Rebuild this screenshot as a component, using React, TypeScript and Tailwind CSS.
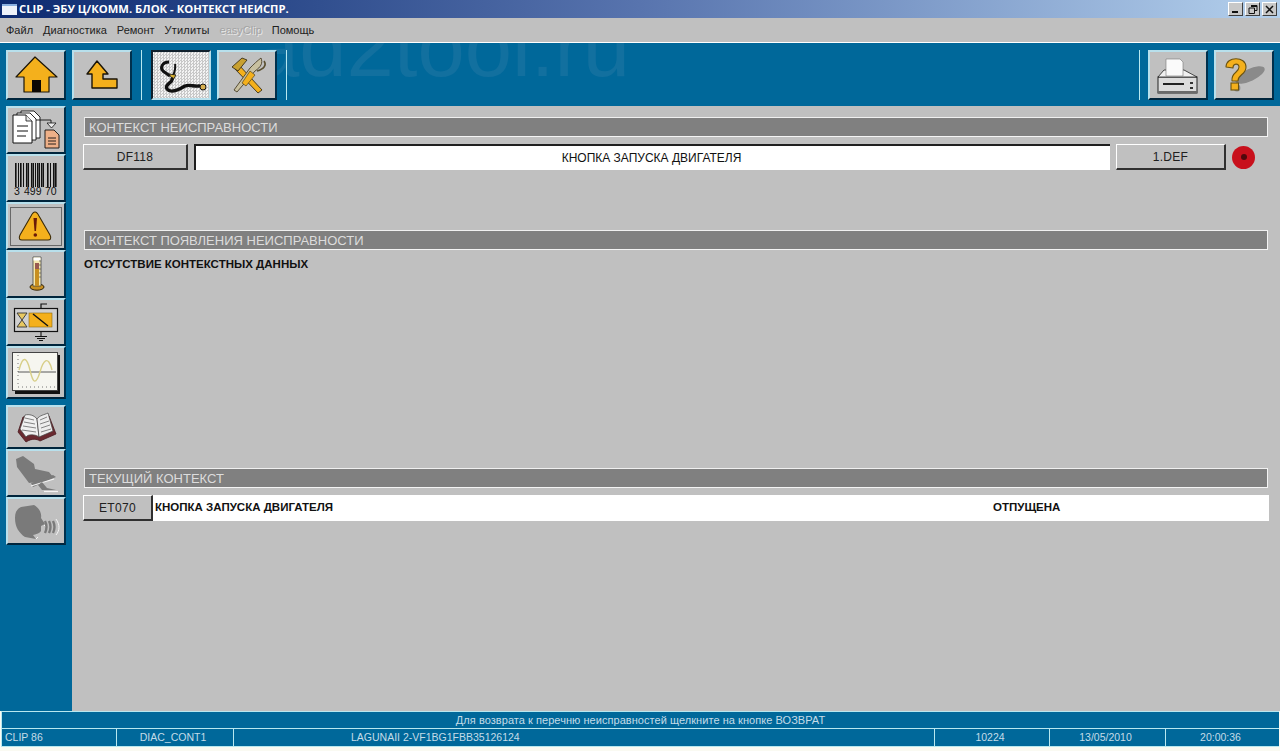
import type { ReactNode } from "react";
import { clsx } from "clsx";

const raised =
  "border-t-2 border-l-2 border-b-2 border-r-2 border-t-[#b8e0ec] border-l-[#b8e0ec] border-b-[#00253c] border-r-[#00304c] bg-[#c0c0c0]";

function IconBtn({
  h,
  className,
  pressed,
  children,
}: {
  h: number;
  className: string;
  pressed?: boolean;
  children: ReactNode;
}) {
  return (
    <div
      className={clsx(
        "relative w-[60px] shrink-0 overflow-hidden",
        className,
        pressed
          ? "border-2 border-t-[#10202c] border-l-[#10202c] border-b-[#b8e0ec] border-r-[#b8e0ec] bg-[repeating-conic-gradient(#c8c8c8_0_25%,#f4f4f4_0_50%)] bg-[length:3px_3px]"
          : raised
      )}
    >
      <svg width="56" height={h - 4} viewBox={`2 2 56 ${h - 4}`} className="block">
        {children}
      </svg>
    </div>
  );
}

const yellow = "#f4b01c";

function HomeIcon() {
  return (
    <>
      <path d="M29 7 L51 27 H43 V42 H18 V27 H10 Z" fill={yellow} stroke="#1a1408" strokeWidth="1.2" strokeLinejoin="round" />
      <rect x="26" y="30" width="9" height="12" fill="#0c0804" />
    </>
  );
}

function UpIcon() {
  return <path d="M25 11 L36 24 H31 V29 H45 V38 H20 V24 H15 Z" fill={yellow} stroke="#1a1408" strokeWidth="1.4" strokeLinejoin="round" />;
}

function StethoscopeIcon() {
  return (
    <>
      <path d="M18 12 C11 12 9 18 12 21 L19 26" fill="none" stroke="#111" strokeWidth="3" />
      <path d="M24 14 C25 18 24 21 22 26" fill="none" stroke="#111" strokeWidth="2" />
      <path d="M18 24 L25 25 L22 30 Z" fill="#d8b030" stroke="#111" strokeWidth="0.8" />
      <path d="M21 29 C22 33 13 34 16 39 C20 44 29 39 34 36 C39 34 43 37 48 36" fill="none" stroke="#111" strokeWidth="3.400" strokeLinecap="round" />
      <circle cx="52" cy="37" r="3" fill="#d8b050" stroke="#111" strokeWidth="1" />
    </>
  );
}

function ToolsIcon() {
  return (
    <>
      <path d="M22 15 L45 40 L41 43 L18 19 Z" fill={yellow} stroke="#3a3018" strokeWidth="0.9" />
      <path d="M15 17 L25 8 L30 10 L21 21 Z" fill="#c8a030" stroke="#3a3018" strokeWidth="0.9" />
      <path d="M44 8 C46 13 44 17 38 21 L20 42 L17 40 L33 18 C37 14 40 11 44 8 Z" fill="#c8c0a0" stroke="#4a4028" strokeWidth="0.9" />
      <path d="M33 21 L38 25 L29 36 L25 33 Z" fill={yellow} stroke="#3a3018" strokeWidth="0.6" />
      <path d="M47 11 C50 15 47 19 40 21" fill="none" stroke="#5a5030" strokeWidth="1.6" />
    </>
  );
}

function PrintIcon() {
  return (
    <>
      <rect x="10" y="27" width="39" height="16" fill="#dcdcdc" stroke="#222" strokeWidth="1" />
      <path d="M10 27 L16 20 H36 L49 27 Z" fill="#f0f0f0" stroke="#222" strokeWidth="0.8" />
      <path d="M18 9 H32 L35 12 V26 H18 Z" fill="#fafafa" stroke="#777" strokeWidth="0.6" />
      <rect x="15" y="33" width="21" height="2" fill="#222" />
      <rect x="42" y="32" width="3" height="2" fill="#333" />
      <rect x="42" y="37" width="3" height="2" fill="#333" />
      <rect x="10" y="41" width="39" height="2" fill="#6a6a6a" />
    </>
  );
}

function HelpIcon() {
  return (
    <>
      <ellipse cx="36" cy="25" rx="16" ry="6" fill="#8a8a8a" transform="rotate(-25 36 25)" />
      <circle cx="23" cy="38" r="3.400" fill="#8a8a8a" />
      <path d="M12 17 C12 6 32 6 32 17 C32 25 24 24 24 31 H18 C17 22 25 23 25 17 C25 13 19 13 19 18 Z" fill={yellow} stroke="#6a5210" strokeWidth="1.1" strokeLinejoin="round" />
      <rect x="17" y="33" width="7.500" height="7" fill={yellow} stroke="#6a5210" strokeWidth="1.1" />
    </>
  );
}

function DocsIcon() {
  return (
    <>
      <path d="M15 5 H28 L34 11 V32 H15 Z" fill="#fff" stroke="#111" strokeWidth="0.9" />
      <path d="M11 7 H24 L30 13 V34 H11 Z" fill="#fff" stroke="#111" strokeWidth="0.9" />
      <path d="M7 9 H20 L26 15 V37 H7 Z" fill="#fff" stroke="#111" strokeWidth="1" />
      <path d="M20 9 V15 H26" fill="#e8e8e8" stroke="#111" strokeWidth="0.8" />
      <path d="M11 20 H22 M11 25 H22 M11 30 H20" stroke="#111" strokeWidth="1" />
      <path d="M30 14 H45 M45 14 V17" stroke="#111" strokeWidth="0.9" fill="none" />
      <path d="M41 17 H50 L45.500 22 Z" fill="#eee" stroke="#111" strokeWidth="0.8" />
      <path d="M39 24 H48 L53 29 V42 H39 Z" fill="#eeb088" stroke="#111" strokeWidth="0.9" />
      <path d="M42 32 H50 M42 35 H50 M42 38 H50" stroke="#111" strokeWidth="0.9" />
    </>
  );
}

const barX = [9, 12, 14, 17, 20, 22, 25, 27, 29, 31, 33, 35, 37, 41, 44, 47, 49];
const barW = [1.6, 1, 1.6, 1, 1.6, 1, 1.6, 1, 1, 1.6, 1, 1.6, 1, 1.6, 1, 1.6, 1.6];

function BarcodeIcon() {
  return (
    <>
      {barX.map((x, i) => (
        <rect key={x} x={x} y="9" width={barW[i]} height="24" fill="#111" />
      ))}
      <text x="8" y="40.500" fontFamily="Liberation Sans, sans-serif" fontSize="10.500" fill="#111">
        3
      </text>
      <text x="18" y="40.500" fontFamily="Liberation Sans, sans-serif" fontSize="10.500" fill="#111">
        499
      </text>
      <text x="39" y="40.500" fontFamily="Liberation Sans, sans-serif" fontSize="10.500" fill="#111">
        70
      </text>
    </>
  );
}

function WarningIcon() {
  return (
    <>
      <rect x="4.500" y="5.500" width="51" height="38" fill="none" stroke="#111" strokeWidth="1" strokeDasharray="1 1" />
      <path d="M29 10 C31 10 32 12 33 14 L44 33 C46 37 44 38 42 38 H16 C14 38 12 37 14 33 L25 14 C26 12 27 10 29 10 Z" fill={yellow} stroke="#3a2a08" strokeWidth="1.1" />
      <path d="M27.500 16 H31 L30 29 H28.500 Z" fill="#6a1a08" />
      <circle cx="29.300" cy="33" r="1.800" fill="#6a1a08" />
    </>
  );
}

function ThermoIcon() {
  return (
    <>
      <ellipse cx="31" cy="37" rx="7" ry="3.200" fill="#c89020" stroke="#332408" strokeWidth="1" />
      <path d="M27 7 H35 V36 H27 Z" fill="#f4e8b0" stroke="#444" strokeWidth="0.8" />
      <rect x="27.500" y="7.500" width="7" height="3" fill="#fff" />
      <rect x="29" y="14" width="4" height="22" fill="#c89020" />
      <rect x="29" y="13" width="4" height="6" fill="#9a5a50" />
      <path d="M33 11 H35 M33 15 H35 M33 19 H35 M33 23 H35 M33 27 H35" stroke="#555" strokeWidth="0.7" />
    </>
  );
}

function ValveIcon() {
  return (
    <>
      <path d="M35 10 V6 H41" fill="none" stroke="#111" strokeWidth="1.200" />
      <rect x="8.500" y="10.500" width="43" height="23" fill="#d0d0d0" stroke="#111" strokeWidth="1.200" />
      <rect x="23" y="15" width="23" height="14" fill={yellow} stroke="#8a6a10" strokeWidth="0.6" />
      <path d="M11 15 H21 L11 29 H21 Z" fill="#e8c860" stroke="#333" strokeWidth="0.9" />
      <path d="M27 16 L42 28" stroke="#111" strokeWidth="1.400" />
      <path d="M35 34 V38 M29 38.500 H41 M31 40.500 H39 M33 42.500 H37" stroke="#111" strokeWidth="1.100" />
    </>
  );
}

function GraphIcon() {
  return (
    <>
      <rect x="9" y="9" width="45" height="39" fill="#111" />
      <rect x="6.500" y="6.500" width="45" height="38" fill="#f6f6f0" stroke="#444" strokeWidth="1" />
      <path d="M12 9 V41 M12 41 H49" stroke="#555" strokeWidth="0.8" strokeDasharray="1 3" />
      <path d="M12 26 H50" stroke="#333" strokeWidth="0.8" />
      <path d="M13 24 C17 8 21 12 24 24 C27 38 30 39 34 26 C37 15 42 8 46 24" fill="none" stroke="#d8cf88" strokeWidth="1.400" />
    </>
  );
}

function BookIcon() {
  return (
    <>
      <path d="M12 27 L20 37 C26 33 31 34 34 36 L50 29 L43 11 L32 15 C27 11 20 11 17 12 Z" fill="#6a2a30" stroke="#4a1a20" strokeWidth="0.8" />
      <path d="M14 24 L19 10 C23 9 28 10 31 14 L33 32 C29 29 22 29 20 32 Z" fill="#f0f0f0" stroke="#444" strokeWidth="0.7" />
      <path d="M31 14 C34 10 38 10 42 8 L47 26 L33 32 Z" fill="#ececec" stroke="#444" strokeWidth="0.7" />
      <path d="M19 13 L28 15 M18 17 L29 19 M17 21 L30 23 M16 25 L30 27 M34 15 L41 12 M34 19 L43 16 M35 23 L44 20 M35 27 L45 24" stroke="#777" strokeWidth="0.9" />
    </>
  );
}

function SeatIcon() {
  return (
    <>
      <path d="M10 10 L17 7 L28 15 L29 20 L43 23 L47 28 L38 32 L23 34 L11 18 Z" fill="#7a7a7a" />
      <path d="M25 34 L47 26 L50 28 L27 38 Z" fill="#7a7a7a" />
      <path d="M25 37 L48 30" stroke="#f4f4f4" strokeWidth="1.200" />
      <path d="M36 33 L41 39 L50 41 H36 L32 36 Z" fill="#7a7a7a" />
      <path d="M38 42.500 H52" stroke="#f4f4f4" strokeWidth="1.200" />
    </>
  );
}

function VoiceIcon() {
  return (
    <>
      <path d="M15 10 L28 8 C33 11 36 16 35 21 L39 27 L35 29 L35 34 C33 37 30 37 27 38 L30 42 L19 40 C13 36 9 30 9 21 C9 15 11 12 15 10 Z" fill="#7a7a7a" />
      <path d="M30 42 L32 40 M38 28 L40 30" stroke="#f4f4f4" strokeWidth="1" />
      {[39, 43, 47].map((x) => (
        <path key={x} d={`M${x} 24 C${x + 2} 28 ${x + 2} 32 ${x} 36`} fill="none" stroke="#7a7a7a" strokeWidth="2.400" />
      ))}
      <path d="M50 22 C54 28 54 33 50 38" fill="none" stroke="#f4f4f4" strokeWidth="1" />
    </>
  );
}

function SectionHeader({ title, className }: { title: string; className?: string }) {
  return (
    <div
      className={clsx(
        "ml-[12px] mr-[12px] h-[20px] bg-[#808080] border-t border-r border-b border-l border-t-[#f0f0f0] border-l-[#e8e8e8] border-r-[#f4f4f4] border-b-[#f4f4f4] pl-[4px] text-[13px] leading-[19px] text-[#dcdcdc]",
        className
      )}
    >
      {title}
    </div>
  );
}

function RowBtn({ label, className }: { label: string; className: string }) {
  return (
    <div
      className={clsx(
        "h-[26px] flex items-center justify-center bg-[#c0c0c0] border-t border-l border-t-white border-l-white border-b-2 border-r-2 border-b-[#303030] border-r-[#303030] text-[12px] text-[#202020] tracking-[0.3px]",
        className
      )}
    >
      {label}
    </div>
  );
}

const statusCell = "h-[17px] flex items-center justify-center border-l border-[#b8e8f0] text-[10.500px] text-[#c4dce8] pr-[4px]";

export default function App() {
  return (
    <div className="relative w-[1280px] h-[751px] overflow-hidden flex flex-col bg-[#c0c0c0] font-['Liberation_Sans',Arial,sans-serif]">
      {/* title bar */}
      <div className="h-[18px] flex items-center bg-gradient-to-r from-[#0c2a70] via-[#5874ae] to-[#b4d0ec]">
        <div className="ml-[2px] w-[15px] h-[11px] bg-[#eef2fa] border-t-2 border-[#8ab0e0]" />
        <div className="ml-[2px] text-[11.250px] font-bold text-white leading-none font-['Open_Sans',sans-serif]">
          CLIP - ЭБУ Ц/КОММ. БЛОК - КОНТЕКСТ НЕИСПР.
        </div>
        <div className="ml-auto mr-[3px] flex">
          <WinBtn>
            <rect x="3" y="8" width="6" height="2" fill="#111" />
          </WinBtn>
          <div className="w-[2px]" />
          <WinBtn>
            <path d="M5 2.500 H11 V7.500 H9 M3 5 H8.500 V10.500 H3 Z M5 3.500 H11" fill="none" stroke="#111" strokeWidth="1" />
          </WinBtn>
          <div className="w-[2px]" />
          <WinBtn>
            <path d="M3 3 L10 10 M10 3 L3 10" stroke="#111" strokeWidth="1.500" />
          </WinBtn>
        </div>
      </div>

      {/* menu */}
      <div className="h-[24px] flex items-center pl-[6px] gap-[10px] text-[11px] text-[#202020] border-b border-white bg-[#c0c0c0] box-content">
        <span>Файл</span>
        <span>Диагностика</span>
        <span>Ремонт</span>
        <span className="w-[45px] tracking-[0.2px]">Утилиты</span>
        <span className="text-[#a4a4a4] [text-shadow:1px_1px_0_#e8e8e8]">easyClip</span>
        <span>Помощь</span>
      </div>

      {/* toolbar */}
      <div className="relative h-[63px] overflow-hidden bg-[#00689a] flex items-center pl-[6px] pr-[6px] pt-[1px]">
        <div className="absolute left-[252px] -top-[39px] whitespace-nowrap text-[85px] leading-[85px] text-[#12709f]">ad2tool.ru</div>
        <IconBtn h={50} className="h-[50px]">
          <HomeIcon />
        </IconBtn>
        <IconBtn h={50} className="h-[50px] ml-[6px]">
          <UpIcon />
        </IconBtn>
        <div className="relative ml-[9px] h-[50px] w-px bg-[#b8e8f0]" />
        <IconBtn h={50} className="h-[50px] ml-[9px]" pressed>
          <StethoscopeIcon />
        </IconBtn>
        <IconBtn h={50} className="h-[50px] ml-[6px]">
          <ToolsIcon />
        </IconBtn>
        <div className="relative ml-[9px] h-[50px] w-px bg-[#b8e8f0]" />
        <div className="relative ml-auto h-[50px] w-px bg-[#b8e8f0]" />
        <IconBtn h={50} className="h-[50px] ml-[8px]">
          <PrintIcon />
        </IconBtn>
        <IconBtn h={50} className="h-[50px] ml-[6px]">
          <HelpIcon />
        </IconBtn>
      </div>

      <div className="flex-1 flex min-h-0">
        {/* sidebar */}
        <div className="w-[72px] bg-[#00689a] pl-[6px] flex flex-col">
          <IconBtn h={48} className="h-[48px]">
            <DocsIcon />
          </IconBtn>
          <IconBtn h={48} className="h-[48px]">
            <BarcodeIcon />
          </IconBtn>
          <IconBtn h={48} className="h-[48px]">
            <WarningIcon />
          </IconBtn>
          <IconBtn h={48} className="h-[48px]">
            <ThermoIcon />
          </IconBtn>
          <IconBtn h={48} className="h-[48px]">
            <ValveIcon />
          </IconBtn>
          <IconBtn h={53} className="h-[53px]">
            <GraphIcon />
          </IconBtn>
          <IconBtn h={44} className="h-[44px] mt-[6px]">
            <BookIcon />
          </IconBtn>
          <IconBtn h={48} className="h-[48px]">
            <SeatIcon />
          </IconBtn>
          <IconBtn h={48} className="h-[48px]">
            <VoiceIcon />
          </IconBtn>
        </div>

        {/* content */}
        <div className="flex-1 pt-[11px] flex flex-col">
          <SectionHeader title="КОНТЕКСТ НЕИСПРАВНОСТИ" />
          <div className="mt-[7px] ml-[11px] flex items-center">
            <RowBtn label="DF118" className="w-[105px]" />
            <div className="ml-[6px] w-[916px] h-[26px] flex items-center justify-center pr-[3px] bg-white border-t-2 border-l-2 border-t-[#202020] border-l-[#202020] text-[12px] text-[#111]">
              КНОПКА ЗАПУСКА ДВИГАТЕЛЯ
            </div>
            <RowBtn label="1.DEF" className="ml-[6px] w-[110px]" />
            <div className="ml-[6px] w-[23px] h-[23px] rounded-full bg-[#c8101c] flex items-center justify-center">
              <div className="w-[6px] h-[6px] rounded-full bg-[#50080c]" />
            </div>
          </div>

          <SectionHeader title="КОНТЕКСТ ПОЯВЛЕНИЯ НЕИСПРАВНОСТИ" className="mt-[60px]" />
          <div className="mt-[7px] ml-[12px] text-[11.500px] leading-[14px] font-bold text-[#111]">ОТСУТСТВИЕ КОНТЕКСТНЫХ ДАННЫХ</div>

          <SectionHeader title="ТЕКУЩИЙ КОНТЕКСТ" className="mt-[197px]" />
          <div className="mt-[7px] ml-[11px] mr-[11px] flex bg-white h-[26px]">
            <RowBtn label="ET070" className="w-[70px]" />
            <div className="pl-[2px] w-[840px] flex items-center text-[11.500px] font-bold text-[#111]">КНОПКА ЗАПУСКА ДВИГАТЕЛЯ</div>
            <div className="flex items-center text-[11.500px] font-bold text-[#111]">ОТПУЩЕНА</div>
          </div>
        </div>
      </div>

      {/* status bar */}
      <div className="h-[40px] bg-[#fafaf2]">
        <div className="mx-[1px] bg-[#00689a] border-t border-[#b8e8f0]">
          <div className="h-[17px] pt-[1px] flex items-center justify-center border-l border-b border-[#b8e8f0] text-[11px] tracking-[0.05px] text-[#c4dce8]">
            Для возврата к перечню неисправностей щелкните на кнопке ВОЗВРАТ
          </div>
          <div className="grid grid-cols-[115px_117px_701px_115px_116px_114px]">
            <div className={clsx(statusCell, "!justify-start pl-[3px]")}>CLIP 86</div>
            <div className={statusCell}>DIAC_CONT1</div>
            <div className={clsx(statusCell, "!justify-start pl-[117px]")}>LAGUNAII 2-VF1BG1FBB35126124</div>
            <div className={statusCell}>10224</div>
            <div className={statusCell}>13/05/2010</div>
            <div className={statusCell}>20:00:36</div>
          </div>
          <div className="h-px bg-[#b8e8f0]" />
        </div>
      </div>
    </div>
  );
}

function WinBtn({ children }: { children: ReactNode }) {
  return (
    <div className="w-[15px] h-[14px] bg-[#c8c8c8] border-t border-l border-white border-b border-r border-b-[#404040] border-r-[#404040]">
      <svg width="13" height="12" viewBox="0 0 13 12" className="block">
        {children}
      </svg>
    </div>
  );
}
